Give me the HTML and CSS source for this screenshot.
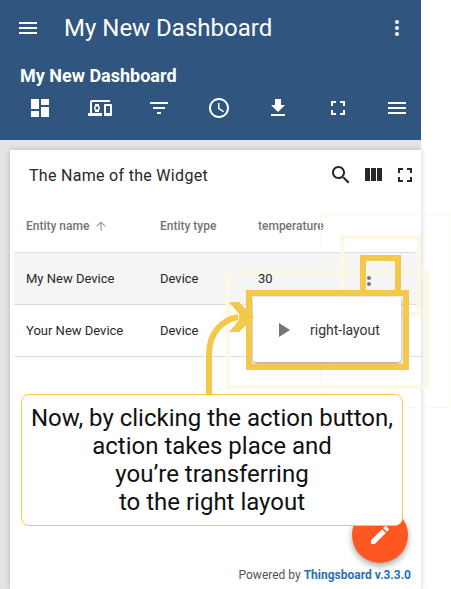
FILE: index.html
```html
<!DOCTYPE html>
<html lang="en">
<head>
    <meta charset="UTF-8">
    <title>My New Dashboard</title>
    <link rel="stylesheet" href="styles.css">
</head>
<body>
    <div class="page">
        <header class="topbar">
            <div class="appbar">
                <svg class="icon menu-icon" viewBox="0 0 24 24"><path d="M3 18h18v-2H3v2zm0-5h18v-2H3v2zm0-7v2h18V6H3z"/></svg>
                <div class="app-title">My New Dashboard</div>
                <svg class="icon" viewBox="0 0 24 24"><path d="M12 8c1.100 0 2-.9 2-2s-.9-2-2-2-2 .9-2 2 .9 2 2 2zm0 2c-1.100 0-2 .9-2 2s.9 2 2 2 2-.9 2-2-.9-2-2-2zm0 6c-1.100 0-2 .9-2 2s.9 2 2 2 2-.9 2-2-.9-2-2-2z"/></svg>
            </div>
            <div class="dash-title">My New Dashboard</div>
            <div class="toolbar">
                <svg class="icon" viewBox="0 0 24 24"><path d="M3 13h8V3H3v10zm0 8h8v-6H3v6zm10 0h8V11h-8v10zm0-18v6h8V3h-8z"/></svg>
                <svg class="icon" viewBox="0 0 24 24"><path d="M4 6h18V4H4c-1.100 0-2 .9-2 2v11H0v3h14v-3H4V6zm19 2h-6c-.5 0-1 .5-1 1v10c0 .5.500 1 1 1h6c.5 0 1-.5 1-1V9c0-.5-.5-1-1-1zm-1 9h-4v-7h4v7zM11 8H7v1.800C6.400 10.300 6 11.100 6 12s.4 1.700 1 2.200V16h4v-1.800c.6-.5 1-1.300 1-2.200s-.4-1.700-1-2.200V8zm-2 5.500c-.8 0-1.500-.7-1.500-1.500s.7-1.500 1.500-1.500 1.500.7 1.500 1.500-.7 1.500-1.500 1.500z"/></svg>
                <svg class="icon" viewBox="0 0 24 24"><path d="M10 18h4v-2h-4v2zM3 6v2h18V6H3zm3 7h12v-2H6v2z"/></svg>
                <svg class="icon" viewBox="0 0 24 24"><path d="M11.990 2C6.470 2 2 6.480 2 12s4.470 10 9.990 10C17.520 22 22 17.520 22 12S17.520 2 11.990 2zM12 20c-4.420 0-8-3.580-8-8s3.580-8 8-8 8 3.580 8 8-3.580 8-8 8zm.5-13H11v6l5.250 3.150.75-1.230-4.500-2.670z"/></svg>
                <svg class="icon" viewBox="0 0 24 24"><path d="M19 9h-4V3H9v6H5l7 7 7-7zM5 18v2h14v-2H5z"/></svg>
                <svg class="icon" viewBox="0 0 24 24"><path d="M7 14H5v5h5v-2H7v-3zm-2-4h2V7h3V5H5v5zm12 7h-3v2h5v-5h-2v3zM14 5v2h3v3h2V5h-5z"/></svg>
                <svg class="icon" viewBox="0 0 24 24"><path d="M3 18h18v-2H3v2zm0-5h18v-2H3v2zm0-7v2h18V6H3z"/></svg>
            </div>
        </header>
        <main class="canvas">
            <section class="card">
                <div class="card-head">
                    <div class="card-title">The Name of the Widget</div>
                    <svg class="icon" viewBox="0 0 24 24"><path d="M15.500 14h-.79l-.28-.27C15.410 12.590 16 11.110 16 9.500 16 5.910 13.090 3 9.500 3S3 5.910 3 9.500 5.910 16 9.500 16c1.610 0 3.090-.59 4.230-1.570l.27.28v.79l5 4.990L20.490 19l-4.990-5zm-6 0C7.010 14 5 11.990 5 9.500S7.010 5 9.500 5 14 7.010 14 9.500 11.990 14 9.500 14z"/></svg>
                    <svg class="icon" viewBox="0 0 24 24"><path d="M10 18h5V5h-5v13zm-6 0h5V5H4v13zM16 5v13h5V5h-5z"/></svg>
                    <svg class="icon" viewBox="0 0 24 24"><path d="M7 14H5v5h5v-2H7v-3zm-2-4h2V7h3V5H5v5zm12 7h-3v2h5v-5h-2v3zM14 5v2h3v3h2V5h-5z"/></svg>
                </div>
                <div class="row row-head">
                    <div class="col-name">Entity name
                        <svg class="sort-icon" viewBox="0 0 24 24"><path d="M4 12l1.410 1.410L11 7.830V20h2V7.830l5.580 5.590L20 12l-8-8-8 8z"/></svg>
                    </div>
                    <div class="col-type">Entity type</div>
                    <div>temperature</div>
                </div>
                <div class="row row-hover">
                    <div class="col-name">My New Device</div>
                    <div class="col-type">Device</div>
                    <div class="col-temp">30</div>
                    <svg class="dots" viewBox="0 0 24 24"><path d="M12 8c1.100 0 2-.9 2-2s-.9-2-2-2-2 .9-2 2 .9 2 2 2zm0 2c-1.100 0-2 .9-2 2s.9 2 2 2 2-.9 2-2-.9-2-2-2zm0 6c-1.100 0-2 .9-2 2s.9 2 2 2 2-.9 2-2-.9-2-2-2z"/></svg>
                </div>
                <div class="row">
                    <div class="col-name">Your New Device</div>
                    <div class="col-type">Device</div>
                </div>
                <div class="powered">Powered by <b>Thingsboard v.3.3.0</b></div>
            </section>
        </main>
    </div>

    <div class="ghost ghost-a"></div>
    <div class="ghost ghost-b"></div>
    <div class="ghost ghost-c"></div>

    <button class="fab">
        <svg class="icon" viewBox="0 0 24 24"><path d="M3 17.250V21h3.750L17.810 9.940l-3.750-3.750L3 17.250zM20.710 7.040c.39-.39.39-1.020 0-1.410l-2.340-2.340c-.39-.39-1.020-.39-1.410 0l-1.830 1.830 3.750 3.750 1.830-1.830z"/></svg>
    </button>

    <div class="menu">
        <svg class="play" viewBox="0 0 24 24"><path d="M8 5v14l11-7z"/></svg>
        <span>right-layout</span>
    </div>
    <div class="mark mark-dots"></div>
    <div class="mark mark-menu"></div>

    <svg class="arrow" viewBox="0 0 60 105">
        <path d="M9 105V64C9 43 22 30 38 27" fill="none" stroke="#f4c84a" stroke-width="6"/>
        <path d="M29 12h10l15 15-15 15H29l10-12v-6z" fill="#f4c84a"/>
    </svg>

    <div class="note">Now, by clicking the action button,<br>action takes place and<br>you’re transferring<br>to the right layout</div>
</body>
</html>
```

FILE: styles.css
```css
body {
    margin: 0;
    height: 589px;
    overflow: hidden;
    background: #fff;
    font-family: Roboto, sans-serif;
    color: #282828;
}

.page {
    width: 421px;
    height: 589px;
    display: flex;
    flex-direction: column;
}

.icon {
    width: 24px;
    height: 24px;
    fill: currentColor;
    flex: none;
}

.topbar {
    height: 140px;
    background: #305680;
    color: #fff;
    box-sizing: border-box;
    padding: 0 12px 0 16px;
}

.appbar {
    height: 56px;
    display: flex;
    align-items: center;
}

.app-title {
    flex: 1;
    margin-left: 24px;
    font-size: 24px;
}

.dash-title {
    margin: 8px 0 0 4px;
    font-size: 18px;
    font-weight: 700;
    height: 24px;
    line-height: 24px;
}

.toolbar {
    margin-top: 8px;
    display: flex;
    justify-content: space-between;
    padding: 0 0 0 12px;
}

.canvas {
    flex: 1;
    background: #e4e4e4;
    padding: 10px 0 0 10px;
    display: flex;
}

.card {
    flex: 1;
    background: #fff;
    position: relative;
    box-shadow: 0 0 6px rgba(0, 0, 0, 0.2);
}

.card-head {
    height: 50px;
    display: flex;
    align-items: center;
    gap: 8px;
    padding: 0 4px 0 19px;
}

.card-title {
    flex: 1;
    font-size: 16px;
    letter-spacing: 0.3px;
}

.row {
    height: 51px;
    display: flex;
    align-items: center;
    border-bottom: 1px solid #dedede;
    margin-left: 4px;
    padding-left: 12px;
    font-size: 13px;
    position: relative;
}

.row-head {
    height: 52px;
    font-size: 12px;
    font-weight: 500;
    color: #757575;
}

.row-hover {
    background: #f5f5f5;
}

.col-name {
    width: 134px;
    display: flex;
    align-items: center;
    gap: 5px;
}

.col-type {
    width: 98px;
}

.sort-icon {
    width: 14px;
    height: 14px;
    fill: #9e9e9e;
}

.dots {
    position: absolute;
    left: 343px;
    top: 13px;
    width: 24px;
    height: 24px;
    fill: #757575;
}

.powered {
    position: absolute;
    right: 10px;
    top: 418px;
    font-size: 12px;
    color: #555;
}

.powered b {
    color: #2a6ebb;
}

.ghost {
    position: absolute;
    border: 4px solid #fdf7e3;
    box-sizing: border-box;
}

.ghost-a {
    left: 320px;
    top: 213px;
    width: 130px;
    height: 195px;
    border-width: 1px;
}

.ghost-b {
    left: 340px;
    top: 235px;
    width: 81px;
    height: 81px;
}

.ghost-c {
    left: 226px;
    top: 270px;
    width: 203px;
    height: 119px;
}

.fab {
    position: absolute;
    left: 352px;
    top: 507px;
    width: 56px;
    height: 56px;
    padding: 0;
    border: 0;
    border-radius: 50%;
    background: #ff5722;
    color: #fff;
    display: flex;
    align-items: center;
    justify-content: center;
    box-shadow: 0 3px 6px rgba(0, 0, 0, 0.35);
}

.menu {
    position: absolute;
    left: 253px;
    top: 297px;
    width: 148px;
    height: 65px;
    box-sizing: border-box;
    background: #fff;
    border-radius: 4px;
    box-shadow: 0 2px 4px rgba(0, 0, 0, 0.4);
    display: flex;
    align-items: center;
    padding-left: 18px;
    gap: 15px;
    font-size: 14px;
    color: #333;
}

.play {
    width: 24px;
    height: 24px;
    fill: #757575;
}

.mark {
    position: absolute;
    border: 6px solid #f4c84a;
    box-sizing: border-box;
}

.mark-dots {
    left: 360px;
    top: 255px;
    width: 41px;
    height: 41px;
}

.mark-menu {
    left: 246px;
    top: 290px;
    width: 163px;
    height: 80px;
}

.arrow {
    position: absolute;
    left: 200px;
    top: 290px;
    width: 60px;
    height: 105px;
}

.note {
    position: absolute;
    left: 21px;
    top: 394px;
    width: 382px;
    height: 132px;
    box-sizing: border-box;
    padding-top: 9px;
    background: #fff;
    border: 1px solid #f4c84a;
    border-radius: 8px;
    text-align: center;
    font-size: 24px;
    line-height: 28px;
    color: #111;
}
```
